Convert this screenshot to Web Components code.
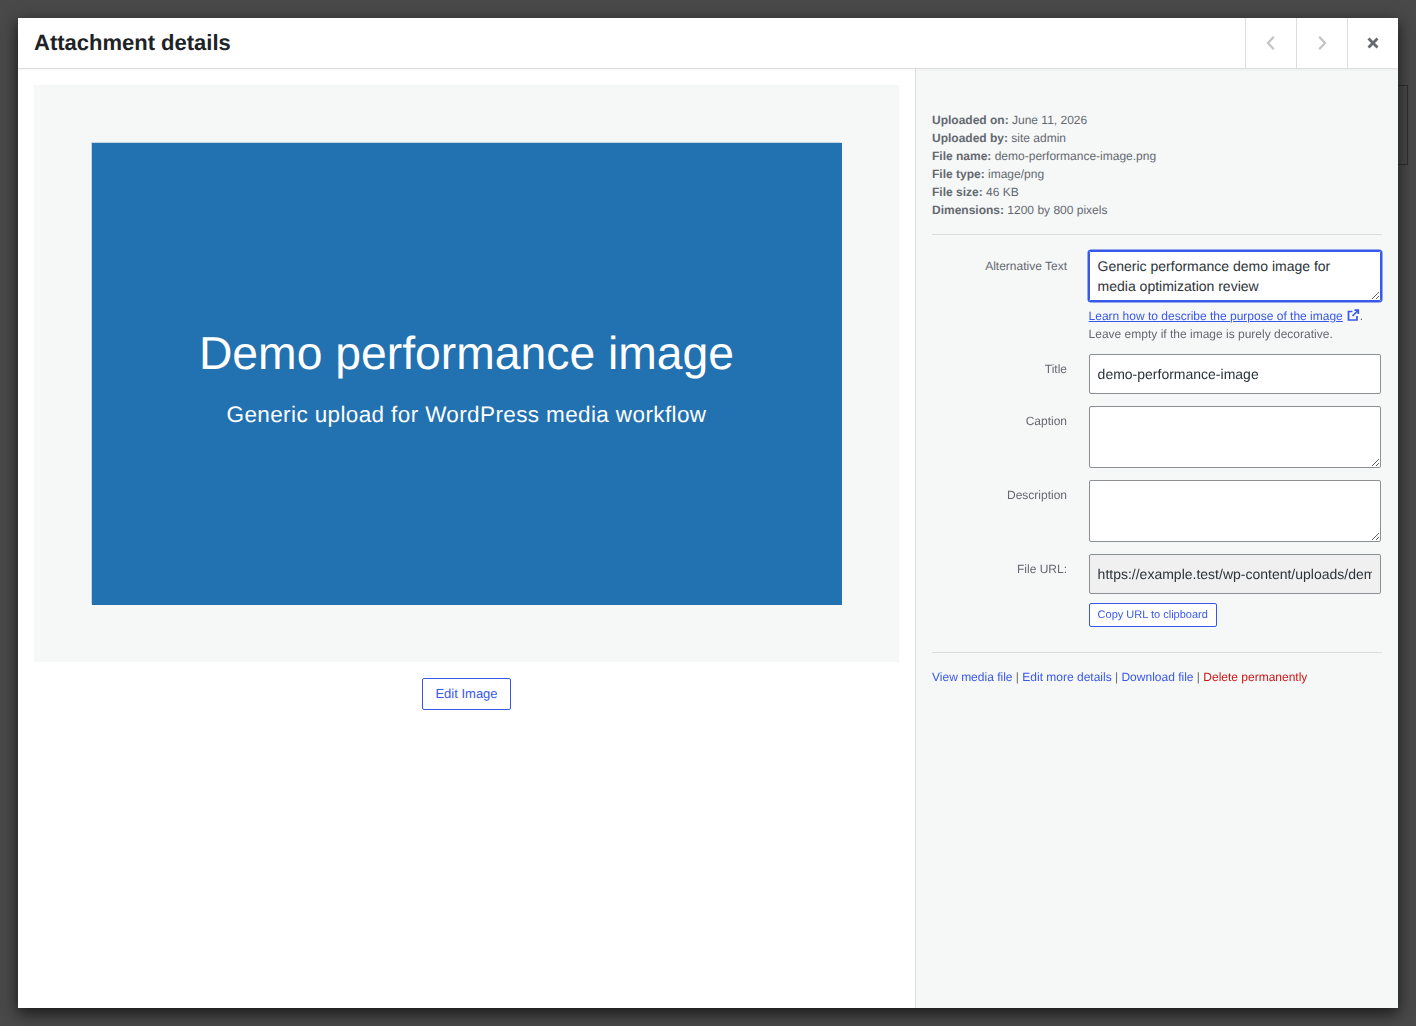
<!DOCTYPE html>
<html lang="en">
<head>
<meta charset="utf-8">
<title>Attachment details</title>
<style>
html,body{margin:0;height:100%;}
body{background:#494949;font-family:"Liberation Sans",Arial,sans-serif;overflow:hidden;text-rendering:geometricPrecision;}
</style>
</head>
<body>
<media-modal>
  <span slot="title">Attachment details</span>
  <media-preview slot="preview"></media-preview>
  <media-sidebar slot="sidebar"></media-sidebar>
</media-modal>
<script>
function def(name, html){
  customElements.define(name, class extends HTMLElement{
    constructor(){super();this.attachShadow({mode:'open'}).innerHTML=html;}
  });
}
def('nav-button',`<style>
:host{display:flex;width:50px;height:50px;align-items:center;justify-content:center;border-left:1px solid #ddd;box-sizing:content-box;}
</style><slot></slot>`);
def('media-modal',`<style>
:host{display:block;box-sizing:border-box;height:100vh;padding:18px;position:relative;}
.behind{position:absolute;left:1398px;top:85px;width:9px;height:78px;border:1px solid #2e2e2e;border-left:0;}
.modal{position:relative;height:100%;background:#fff;box-shadow:0 5px 15px rgba(0,0,0,.7);display:flex;flex-direction:column;}
header{flex:none;height:50px;display:flex;align-items:stretch;justify-content:space-between;border-bottom:1px solid #ddd;box-shadow:0 1px 2px rgba(0,0,0,.04);position:relative;}
h1{margin:0;padding-left:16px;font:600 22px/50px "Liberation Sans",Arial,sans-serif;color:#1d2327;}
.nav{display:flex;}
svg{display:block;width:20px;height:20px;}
.body{flex:1;min-height:0;display:flex;}
.left{width:898px;flex:none;box-sizing:border-box;border-right:1px solid #ddd;}
.right{flex:1;min-width:0;background:#f6f7f7;}
</style>
<div class="behind"></div>
<div class="modal">
<header>
  <h1><slot name="title"></slot></h1>
  <div class="nav">
    <nav-button><svg viewBox="0 0 20 20"><path d="M12.800 3.700L7 10l5.800 6.300" fill="none" stroke="#c3c4c7" stroke-width="2.300"/></svg></nav-button>
    <nav-button><svg viewBox="0 0 20 20"><path d="M7.200 3.700L13 10l-5.800 6.300" fill="none" stroke="#c3c4c7" stroke-width="2.300"/></svg></nav-button>
    <nav-button><svg viewBox="0 0 20 20"><path d="M5.500 5.500l9 9M14.500 5.500l-9 9" fill="none" stroke="#646970" stroke-width="2.800"/></svg></nav-button>
  </div>
</header>
<div class="body">
  <div class="left"><slot name="preview"></slot></div>
  <div class="right"><slot name="sidebar"></slot></div>
</div>
</div>`);
def('media-preview',`<style>
:host{display:block;padding:16px;text-align:center;}
.frame{height:577px;background:#f6f7f7;display:flex;align-items:center;justify-content:center;}
.img{width:750px;height:462px;background:#2271b1;color:#fff;display:flex;flex-direction:column;align-items:center;box-shadow:-1px -1px 0 #c5d6e4;}
.a{font-size:46.300px;line-height:54px;margin-top:183px;white-space:nowrap;}
.b{font-size:22.500px;letter-spacing:.38px;line-height:26px;margin-top:22px;white-space:nowrap;}
.edit{display:inline-block;margin-top:16px;box-sizing:border-box;height:32px;padding:0 12px;border:1px solid #3858e9;border-radius:2px;background:#fff;color:#3858e9;font:13px/30px "Liberation Sans",Arial,sans-serif;text-rendering:geometricPrecision;}
</style>
<div class="frame"><div class="img"><div class="a">Demo performance image</div><div class="b">Generic upload for WordPress media workflow</div></div></div>
<button class="edit">Edit Image</button>`);
def('media-sidebar',`<style>
:host{display:block;padding:42px 16px 0;font-size:12px;line-height:18px;color:#646970;}
b{font-weight:600;}
.meta{padding-bottom:15px;border-bottom:1px solid #dcdcde;}
.row{display:grid;grid-template-columns:135px 292px;column-gap:21.600px;margin-top:12px;}
.row>label{text-align:right;padding-top:6px;}
textarea,input{display:block;box-sizing:border-box;width:292px;margin:0;padding:0 8px;border:1px solid #8c8f94;border-radius:2px;background:#fff;color:#2c3338;font:14px/20px "Liberation Sans",Arial,sans-serif;outline:0;text-rendering:geometricPrecision;}
textarea{padding:6px 8px;height:62px;resize:vertical;}
input{height:40px;}
textarea.alt{height:50px;padding-top:4px;border-color:#3858e9;box-shadow:0 0 0 1.500px #3858e9;}
input[readonly]{background:#f0f0f1;}
.help{margin-top:6px;}
.help a{color:#3858e9;text-decoration:underline;}
.help svg{display:inline-block;width:14px;height:14px;vertical-align:-2px;margin-left:3px;}
.copy{display:block;margin-top:9px;box-sizing:border-box;height:24px;padding:1px 8px 0;border:1px solid #3858e9;border-radius:2px;background:#fff;color:#3858e9;font:11px/21px "Liberation Sans",Arial,sans-serif;text-rendering:geometricPrecision;}
.links{margin-top:25px;border-top:1px solid #dcdcde;padding-top:15px;}
.links a{color:#3858e9;text-decoration:none;}
.links a.del{color:#cc1818;}
</style>
<div class="meta">
<div><b>Uploaded on:</b> June 11, 2026</div>
<div><b>Uploaded by:</b> site admin</div>
<div><b>File name:</b> demo-performance-image.png</div>
<div><b>File type:</b> image/png</div>
<div><b>File size:</b> 46 KB</div>
<div><b>Dimensions:</b> 1200 by 800 pixels</div>
</div>
<div class="row" style="margin-top:16px"><label>Alternative Text</label><div>
<textarea class="alt">Generic performance demo image for media optimization review</textarea>
<div class="help"><a href="#">Learn how to describe the purpose of the image<svg viewBox="0 0 14 14"><path d="M6.500 3.500H2.500V12H11V8M8.500 2.200H12.300V6M12 2.500L6.500 8" fill="none" stroke="#3858e9" stroke-width="1.700"/></svg></a>.<br>Leave empty if the image is purely decorative.</div>
</div></div>
<div class="row" style="margin-top:11px"><label>Title</label><input value="demo-performance-image"></div>
<div class="row"><label>Caption</label><textarea></textarea></div>
<div class="row"><label>Description</label><textarea></textarea></div>
<div class="row"><label>File URL:</label><div><input readonly value="https://example.test/wp-content/uploads/demo-performance-image.png"><button class="copy">Copy URL to clipboard</button></div></div>
<div class="links"><a href="#">View media file</a> | <a href="#">Edit more details</a> | <a href="#">Download file</a> | <a href="#" class="del">Delete permanently</a></div>`);
</script>
</body>
</html>
